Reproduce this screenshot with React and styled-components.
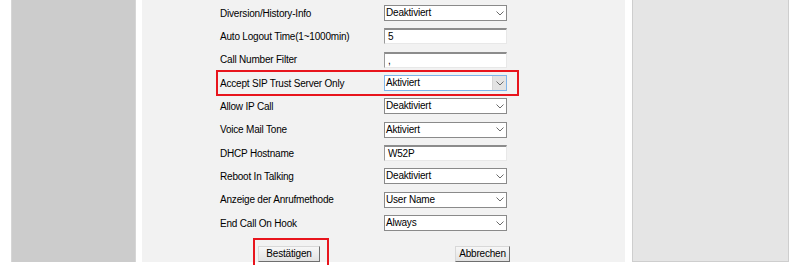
import React from "react";
import styled, { createGlobalStyle } from "styled-components";

const Global = createGlobalStyle`
  html, body { margin: 0; padding: 0; overflow: hidden; background: #ffffff; }
  body { font-family: "Liberation Sans", Arial, sans-serif; }
`;

const Page = styled.div`
  display: flex;
  align-items: flex-start;
  height: 265px;
  padding-left: 11px;
  box-sizing: border-box;
`;

const SidePanel = styled.div`
  width: 125px;
  height: 262px;
  box-sizing: border-box;
  background: #cccccc;
  border-left: 1px solid #d6d6d6;
  border-right: 1px solid #d6d6d6;
`;

const Main = styled.div`
  width: 483px;
  height: 262px;
  margin-left: 6px;
  box-sizing: border-box;
  background: #f2f2f2;
  padding: 1.5px 0 0 78px;
  position: relative;
`;

const AsidePanel = styled.div`
  width: 157px;
  height: 262px;
  margin-left: 7px;
  box-sizing: border-box;
  background: #e5e5e5;
  border: 1px solid #cecece;
  border-top: none;
`;

const Form = styled.div`
  display: grid;
  grid-template-columns: 164px 123px;
  grid-auto-rows: 23.333px;
  align-items: center;
`;

const Row = styled.div`
  display: contents;
`;

const Label = styled.div`
  font-size: 10px;
  letter-spacing: -0.2px;
  color: #000;
  line-height: 14px;
  position: relative;
  top: 0.5px;
  white-space: nowrap;
  ${(p) =>
    p.$marked &&
    `
    &::after {
      content: "";
      position: absolute;
      left: -4px;
      top: -6.5px;
      width: 303px;
      height: 26px;
      box-sizing: border-box;
      border: 2px solid #e8151d;
      pointer-events: none;
    }
  `}
`;

const SelectBox = styled.div`
  display: flex;
  align-items: stretch;
  height: 16px;
  box-sizing: border-box;
  background: #ffffff;
  border: 1px solid ${(p) => (p.$focused ? "#7eb4ea" : "#8a8a8a")};
`;

const SelectText = styled.div`
  flex: 1;
  font-size: 10px;
  letter-spacing: -0.2px;
  line-height: 14px;
  padding-left: 1px;
  color: #000;
  white-space: nowrap;
`;

const ArrowBox = styled.div`
  width: 13px;
  display: flex;
  align-items: center;
  justify-content: center;
  background: ${(p) => (p.$focused ? "#e3e3e3" : "transparent")};
  border-left: 1px solid ${(p) => (p.$focused ? "#d6d6d6" : "transparent")};
`;

const TextInput = styled.div`
  height: 16px;
  box-sizing: border-box;
  background: #ffffff;
  border-top: 2px solid #8c8c8c;
  border-left: 1px solid #9a9a9a;
  border-right: 1px solid #e8e8e8;
  border-bottom: 1px solid #e8e8e8;
  font-size: 10px;
  letter-spacing: -0.2px;
  line-height: 13px;
  padding-left: 3px;
  color: #000;
`;

const ButtonRow = styled.div`
  display: flex;
  padding: 11px 0 0 38px;
  gap: 135px;
`;

const Button = styled.div`
  position: relative;
  width: ${(p) => p.$w}px;
  height: 16px;
  box-sizing: border-box;
  display: flex;
  align-items: center;
  justify-content: center;
  font-size: 10px;
  letter-spacing: -0.2px;
  color: #000;
  background: linear-gradient(#f7f7f7, #e2e2e2);
  border-top: 1px solid #d8d8d8;
  border-left: 1px solid #d8d8d8;
  border-right: 1px solid #6f6f6f;
  border-bottom: 1px solid #6f6f6f;
  ${(p) =>
    p.$marked &&
    `
    &::after {
      content: "";
      position: absolute;
      left: -6px;
      top: -9px;
      width: 76px;
      height: 40px;
      box-sizing: border-box;
      border: 2px solid #e8151d;
      pointer-events: none;
    }
  `}
`;

const Chevron = () => (
  <svg width="8" height="5" viewBox="0 0 8 5">
    <path d="M0.5 0.5 L4 4 L7.5 0.5" fill="none" stroke="#6b6b6b" strokeWidth="1" />
  </svg>
);

const Select = ({ value, focused }) => (
  <SelectBox $focused={focused}>
    <SelectText>{value}</SelectText>
    <ArrowBox $focused={focused}>
      <Chevron />
    </ArrowBox>
  </SelectBox>
);

const rows = [
  { label: "Diversion/History-Info", type: "select", value: "Deaktiviert" },
  { label: "Auto Logout Time(1~1000min)", type: "input", value: "5" },
  { label: "Call Number Filter", type: "input", value: "," },
  { label: "Accept SIP Trust Server Only", type: "select", value: "Aktiviert", marked: true },
  { label: "Allow IP Call", type: "select", value: "Deaktiviert" },
  { label: "Voice Mail Tone", type: "select", value: "Aktiviert" },
  { label: "DHCP Hostname", type: "input", value: "W52P" },
  { label: "Reboot In Talking", type: "select", value: "Deaktiviert" },
  { label: "Anzeige der Anrufmethode", type: "select", value: "User Name" },
  { label: "End Call On Hook", type: "select", value: "Always" },
];

export default function App() {
  return (
    <>
      <Global />
      <Page>
        <SidePanel />
        <Main>
          <Form>
            {rows.map((r) => (
              <Row key={r.label}>
                <Label $marked={r.marked}>{r.label}</Label>
                {r.type === "select" ? (
                  <Select value={r.value} focused={r.marked} />
                ) : (
                  <TextInput>{r.value}</TextInput>
                )}
              </Row>
            ))}
          </Form>
          <ButtonRow>
            <Button $w={62} $marked>Bestätigen</Button>
            <Button $w={55}>Abbrechen</Button>
          </ButtonRow>
        </Main>
        <AsidePanel />
      </Page>
    </>
  );
}
